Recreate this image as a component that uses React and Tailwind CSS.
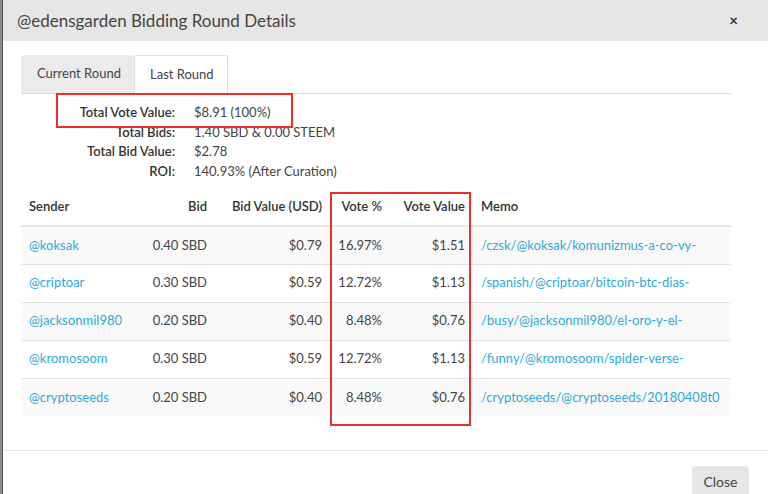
import React from "react";

const rows = [
  { s: "@koksak", b: "0.40 SBD", bv: "$0.79", vp: "16.97%", vv: "$1.51", m: "/czsk/@koksak/komunizmus-a-co-vy-" },
  { s: "@criptoar", b: "0.30 SBD", bv: "$0.59", vp: "12.72%", vv: "$1.13", m: "/spanish/@criptoar/bitcoin-btc-dias-" },
  { s: "@jacksonmil980", b: "0.20 SBD", bv: "$0.40", vp: "8.48%", vv: "$0.76", m: "/busy/@jacksonmil980/el-oro-y-el-" },
  { s: "@kromosoom", b: "0.30 SBD", bv: "$0.59", vp: "12.72%", vv: "$1.13", m: "/funny/@kromosoom/spider-verse-" },
  { s: "@cryptoseeds", b: "0.20 SBD", bv: "$0.40", vp: "8.48%", vv: "$0.76", m: "/cryptoseeds/@cryptoseeds/20180408t0" },
];

const summary = [
  ["Total Vote Value:", "$8.91 (100%)"],
  ["Total Bids:", "1.40 SBD & 0.00 STEEM"],
  ["Total Bid Value:", "$2.78"],
  ["ROI:", "140.93% (After Curation)"],
];

export default function App() {
  return (
    <div
      className="relative flex w-[768px] h-[494px] overflow-hidden bg-white text-[#333]"
      style={{ fontFamily: "Lato, 'Open Sans', sans-serif" }}
    >
      <div className="w-[3px] shrink-0 bg-[#8a8a8a] border-r border-[#555]" />
      <div className="flex-1 flex flex-col bg-white">
        <div className="shrink-0 h-[41px] bg-[#e6e6e6] flex items-center justify-between pl-[14px] pr-[30px]">
          <span className="text-[17px] text-[#444]">@edensgarden Bidding Round Details</span>
          <span className="text-[15px] font-bold text-[#333] leading-none">×</span>
        </div>
        <div className="shrink-0 pl-[18px] pt-[14px]">
          <div className="w-[710px] flex border-b border-[#ddd] h-[39px]">
            <div className="w-[113px] h-[38px] bg-[#ebebeb] rounded-t-[3px] flex items-center pl-[15px] text-[13px] text-[#444] border border-[#ebebeb]">
              Current Round
            </div>
            <div className="w-[94px] h-[39px] bg-white rounded-t-[3px] flex items-center pl-[15px] text-[13px] text-[#444] border border-[#ddd] border-b-white">
              Last Round
            </div>
          </div>
          <div className="pt-[9px] text-[13px] leading-[19.5px]">
            {summary.map(([l, v]) => (
              <div key={l} className="flex">
                <div className="w-[154px] text-right font-semibold text-[#333]">{l}</div>
                <div className="pl-[19px] text-[#444]">{v}</div>
              </div>
            ))}
          </div>
          <table className="mt-[8px] w-[710px] table-fixed border-collapse text-[13px]">
            <colgroup>
              <col className="w-[120px]" />
              <col className="w-[74px]" />
              <col className="w-[115px]" />
              <col className="w-[60px]" />
              <col className="w-[83px]" />
              <col className="w-[258px]" />
            </colgroup>
            <thead>
              <tr className="h-[37px] border-b-2 border-[#e6e6e6]">
                <th className="px-[8px] text-left font-semibold">Sender</th>
                <th className="px-[8px] text-right font-semibold">Bid</th>
                <th className="px-[8px] text-right font-semibold">Bid Value (USD)</th>
                <th className="px-[8px] text-right font-semibold">Vote %</th>
                <th className="px-[8px] text-right font-semibold">Vote Value</th>
                <th className="px-[8px] text-left font-semibold">Memo</th>
              </tr>
            </thead>
            <tbody>
              {rows.map((r, i) => (
                <tr key={r.s} className={`h-[38px] border-t border-[#e3e3e3] ${i % 2 === 0 ? "bg-[#f9f9f9]" : "bg-white"}`}>
                  <td className="px-[8px] text-[#2eaad8]">{r.s}</td>
                  <td className="px-[8px] text-right text-[#444]">{r.b}</td>
                  <td className="px-[8px] text-right text-[#444]">{r.bv}</td>
                  <td className="px-[8px] text-right text-[#444]">{r.vp}</td>
                  <td className="px-[8px] text-right text-[#444]">{r.vv}</td>
                  <td className="px-[8px] text-[#2eaad8] whitespace-nowrap overflow-hidden">{r.m}</td>
                </tr>
              ))}
            </tbody>
          </table>
        </div>
        <div className="shrink-0 mt-[34px] border-t border-[#e5e5e5] flex justify-end pr-[19px] pt-[15px]">
          <div className="w-[57px] h-[30px] bg-[#e6e6e6] rounded-[3px] flex items-center justify-center text-[14px] text-[#444]">
            Close
          </div>
        </div>
      </div>
      <div className="absolute left-[56px] top-[93px] w-[237px] h-[35px] border-2 border-[#ec2f2a] pointer-events-none" />
      <div className="absolute left-[330px] top-[192px] w-[141px] h-[234px] border-2 border-[#ec2f2a] pointer-events-none" />
    </div>
  );
}
